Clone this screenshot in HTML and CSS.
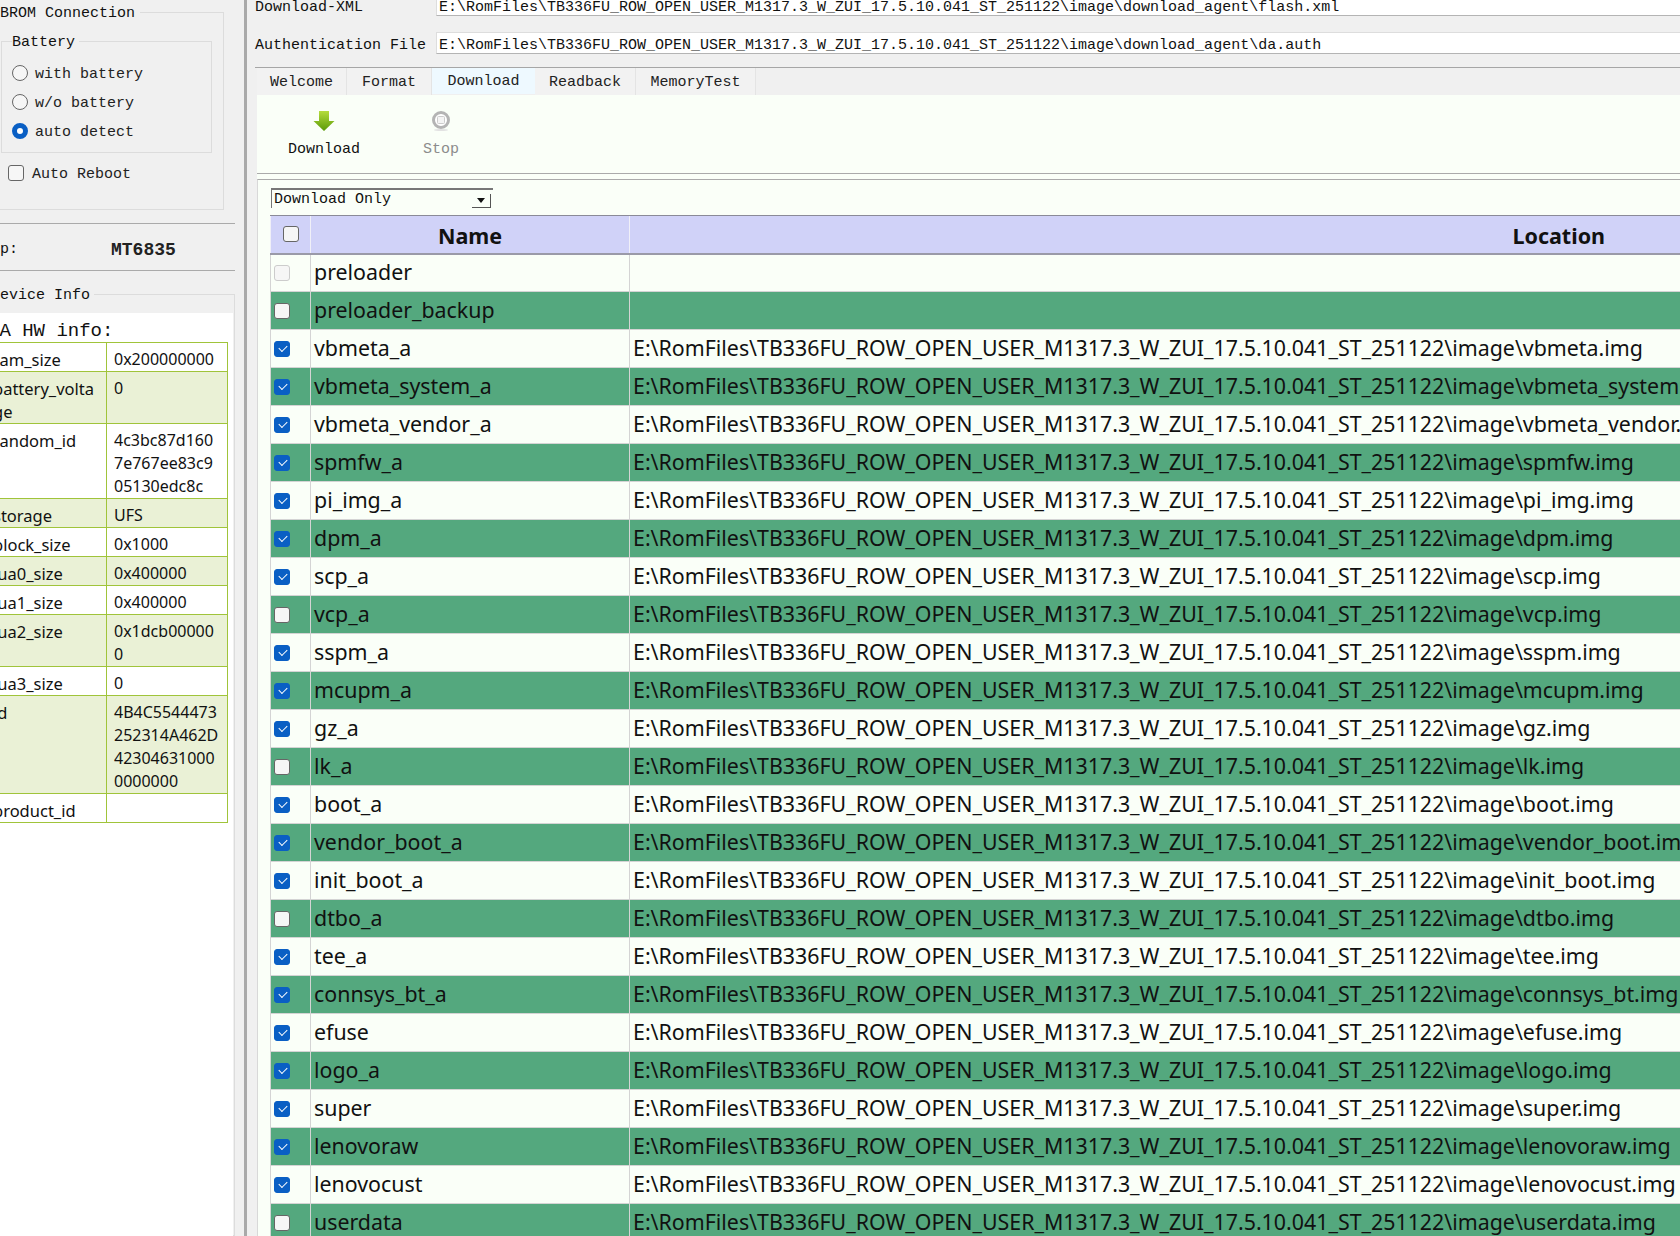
FILE: index.html
```html
<!DOCTYPE html>
<html lang="en">
<head>
<meta charset="utf-8">
<title>Download</title>
<link rel="stylesheet" href="styles.css">
</head>
<body>
<div class="app">
  <aside class="side">
    <fieldset class="brom">
      <legend>BROM Connection</legend>
      <fieldset class="battery">
        <legend>Battery</legend>
        <div class="opt"><span class="radio"></span>with battery</div>
        <div class="opt"><span class="radio"></span>w/o battery</div>
        <div class="opt"><span class="radio on"></span>auto detect</div>
      </fieldset>
      <div class="opt reboot"><span class="cb"></span>Auto Reboot</div>
    </fieldset>
    <div class="chip"><span class="chip-label">Chip:</span><span class="chip-value">MT6835</span></div>
    <fieldset class="device">
      <legend>Device Info</legend>
      <div class="device-pane">
        <div class="hw-title">DA HW info:</div>
        <table class="hw">
          <colgroup><col class="hw-k"><col class="hw-v"></colgroup>
          <tr><td>ram_size</td><td>0x200000000</td></tr>
          <tr class="alt"><td>battery_voltage</td><td>0</td></tr>
          <tr><td>random_id</td><td>4c3bc87d1607e767ee83c905130edc8c</td></tr>
          <tr class="alt"><td>storage</td><td>UFS</td></tr>
          <tr><td>block_size</td><td>0x1000</td></tr>
          <tr class="alt"><td>lua0_size</td><td>0x400000</td></tr>
          <tr><td>lua1_size</td><td>0x400000</td></tr>
          <tr class="alt"><td>lua2_size</td><td>0x1dcb000000</td></tr>
          <tr><td>lua3_size</td><td>0</td></tr>
          <tr class="alt"><td>id</td><td>4B4C5544473252314A462D423046310000000000</td></tr>
          <tr><td>product_id</td><td></td></tr>
        </table>
      </div>
    </fieldset>
  </aside>
  <div class="splitter"></div>
  <main class="main">
    <div class="file-row first"><label>Download-XML</label><div class="path">E:\RomFiles\TB336FU_ROW_OPEN_USER_M1317.3_W_ZUI_17.5.10.041_ST_251122\image\download_agent\flash.xml</div></div>
    <div class="file-row"><label>Authentication File</label><div class="path">E:\RomFiles\TB336FU_ROW_OPEN_USER_M1317.3_W_ZUI_17.5.10.041_ST_251122\image\download_agent\da.auth</div></div>
    <nav class="tabs">
      <div class="tab t1">Welcome</div>
      <div class="tab t2">Format</div>
      <div class="tab t3 active">Download</div>
      <div class="tab t4">Readback</div>
      <div class="tab t5">MemoryTest</div>
    </nav>
    <section class="pane">
      <div class="toolbar">
        <div class="tool">
          <svg class="ic" width="22" height="22" viewBox="0 0 22 22"><defs><linearGradient id="g" x1="0" y1="0" x2="0" y2="1"><stop offset="0" stop-color="#b4dc3c"/><stop offset="1" stop-color="#5a9a08"/></linearGradient></defs><path d="M6 1h10v10h5.500L11 21 .5 11H6z" fill="url(#g)"/></svg>
          <span>Download</span>
        </div>
        <div class="tool off">
          <svg class="ic" width="22" height="22" viewBox="0 0 22 22"><circle cx="11" cy="10" r="7.500" fill="#fff" stroke="#b4b4b4" stroke-width="3"/><rect x="7.500" y="6.500" width="7" height="7" rx="1" fill="#f4f4f4" stroke="#ccc"/><ellipse cx="11" cy="20" rx="7" ry="1" fill="#e2e2e2"/></svg>
          <span>Stop</span>
        </div>
      </div>
      <div class="frame">
        <div class="combo"><span>Download Only</span><span class="arrow"></span></div>
        <table class="parts">
          <colgroup><col class="c0"><col class="c1"><col class="c2"></colgroup>
          <thead><tr><th><span class="box head"></span></th><th>Name</th><th>Location</th></tr></thead>
          <tbody>
            <tr><td><span class="box dis"></span></td><td>preloader</td><td></td></tr>
            <tr><td><span class="box"></span></td><td>preloader_backup</td><td></td></tr>
            <tr><td><span class="box on"></span></td><td>vbmeta_a</td><td>E:\RomFiles\TB336FU_ROW_OPEN_USER_M1317.3_W_ZUI_17.5.10.041_ST_251122\image\vbmeta.img</td></tr>
            <tr><td><span class="box on"></span></td><td>vbmeta_system_a</td><td>E:\RomFiles\TB336FU_ROW_OPEN_USER_M1317.3_W_ZUI_17.5.10.041_ST_251122\image\vbmeta_system.img</td></tr>
            <tr><td><span class="box on"></span></td><td>vbmeta_vendor_a</td><td>E:\RomFiles\TB336FU_ROW_OPEN_USER_M1317.3_W_ZUI_17.5.10.041_ST_251122\image\vbmeta_vendor.img</td></tr>
            <tr><td><span class="box on"></span></td><td>spmfw_a</td><td>E:\RomFiles\TB336FU_ROW_OPEN_USER_M1317.3_W_ZUI_17.5.10.041_ST_251122\image\spmfw.img</td></tr>
            <tr><td><span class="box on"></span></td><td>pi_img_a</td><td>E:\RomFiles\TB336FU_ROW_OPEN_USER_M1317.3_W_ZUI_17.5.10.041_ST_251122\image\pi_img.img</td></tr>
            <tr><td><span class="box on"></span></td><td>dpm_a</td><td>E:\RomFiles\TB336FU_ROW_OPEN_USER_M1317.3_W_ZUI_17.5.10.041_ST_251122\image\dpm.img</td></tr>
            <tr><td><span class="box on"></span></td><td>scp_a</td><td>E:\RomFiles\TB336FU_ROW_OPEN_USER_M1317.3_W_ZUI_17.5.10.041_ST_251122\image\scp.img</td></tr>
            <tr><td><span class="box"></span></td><td>vcp_a</td><td>E:\RomFiles\TB336FU_ROW_OPEN_USER_M1317.3_W_ZUI_17.5.10.041_ST_251122\image\vcp.img</td></tr>
            <tr><td><span class="box on"></span></td><td>sspm_a</td><td>E:\RomFiles\TB336FU_ROW_OPEN_USER_M1317.3_W_ZUI_17.5.10.041_ST_251122\image\sspm.img</td></tr>
            <tr><td><span class="box on"></span></td><td>mcupm_a</td><td>E:\RomFiles\TB336FU_ROW_OPEN_USER_M1317.3_W_ZUI_17.5.10.041_ST_251122\image\mcupm.img</td></tr>
            <tr><td><span class="box on"></span></td><td>gz_a</td><td>E:\RomFiles\TB336FU_ROW_OPEN_USER_M1317.3_W_ZUI_17.5.10.041_ST_251122\image\gz.img</td></tr>
            <tr><td><span class="box"></span></td><td>lk_a</td><td>E:\RomFiles\TB336FU_ROW_OPEN_USER_M1317.3_W_ZUI_17.5.10.041_ST_251122\image\lk.img</td></tr>
            <tr><td><span class="box on"></span></td><td>boot_a</td><td>E:\RomFiles\TB336FU_ROW_OPEN_USER_M1317.3_W_ZUI_17.5.10.041_ST_251122\image\boot.img</td></tr>
            <tr><td><span class="box on"></span></td><td>vendor_boot_a</td><td>E:\RomFiles\TB336FU_ROW_OPEN_USER_M1317.3_W_ZUI_17.5.10.041_ST_251122\image\vendor_boot.img</td></tr>
            <tr><td><span class="box on"></span></td><td>init_boot_a</td><td>E:\RomFiles\TB336FU_ROW_OPEN_USER_M1317.3_W_ZUI_17.5.10.041_ST_251122\image\init_boot.img</td></tr>
            <tr><td><span class="box"></span></td><td>dtbo_a</td><td>E:\RomFiles\TB336FU_ROW_OPEN_USER_M1317.3_W_ZUI_17.5.10.041_ST_251122\image\dtbo.img</td></tr>
            <tr><td><span class="box on"></span></td><td>tee_a</td><td>E:\RomFiles\TB336FU_ROW_OPEN_USER_M1317.3_W_ZUI_17.5.10.041_ST_251122\image\tee.img</td></tr>
            <tr><td><span class="box on"></span></td><td>connsys_bt_a</td><td>E:\RomFiles\TB336FU_ROW_OPEN_USER_M1317.3_W_ZUI_17.5.10.041_ST_251122\image\connsys_bt.img</td></tr>
            <tr><td><span class="box on"></span></td><td>efuse</td><td>E:\RomFiles\TB336FU_ROW_OPEN_USER_M1317.3_W_ZUI_17.5.10.041_ST_251122\image\efuse.img</td></tr>
            <tr><td><span class="box on"></span></td><td>logo_a</td><td>E:\RomFiles\TB336FU_ROW_OPEN_USER_M1317.3_W_ZUI_17.5.10.041_ST_251122\image\logo.img</td></tr>
            <tr><td><span class="box on"></span></td><td>super</td><td>E:\RomFiles\TB336FU_ROW_OPEN_USER_M1317.3_W_ZUI_17.5.10.041_ST_251122\image\super.img</td></tr>
            <tr><td><span class="box on"></span></td><td>lenovoraw</td><td>E:\RomFiles\TB336FU_ROW_OPEN_USER_M1317.3_W_ZUI_17.5.10.041_ST_251122\image\lenovoraw.img</td></tr>
            <tr><td><span class="box on"></span></td><td>lenovocust</td><td>E:\RomFiles\TB336FU_ROW_OPEN_USER_M1317.3_W_ZUI_17.5.10.041_ST_251122\image\lenovocust.img</td></tr>
            <tr><td><span class="box"></span></td><td>userdata</td><td>E:\RomFiles\TB336FU_ROW_OPEN_USER_M1317.3_W_ZUI_17.5.10.041_ST_251122\image\userdata.img</td></tr>
          </tbody>
        </table>
      </div>
    </section>
  </main>
</div>
</body>
</html>
```
FILE: styles.css
```css
* { box-sizing: border-box; }
html, body { margin: 0; height: 100%; overflow: hidden; background: #f0f0f0; }
body { font: 15px/20px "Liberation Mono", monospace; color: #111; }
.app { display: flex; width: 1680px; height: 1236px; overflow: hidden; }

/* left column */
.side { flex: 0 0 244px; width: 244px; display: flex; flex-direction: column; overflow: hidden; }
fieldset { margin: 0; padding: 0; border: 1px solid #dcdcdc; min-width: 0; }
legend { padding: 4px 5px 0; line-height: 20px; }
.brom { margin: 0 0 0 -20px; width: 244px; padding: 0 0 22px; }
.brom > legend { padding: 4px 5px 0 0; margin-left: 19px; }
.battery { margin: 5px 0 0 20px; width: 211px; padding: 5px 0 7px 10px; border-color: #dcdcdc; }
.battery > legend { margin-left: 0; padding: 4px 4px 0 0; }
.opt { display: flex; align-items: center; height: 29px; padding-top: 4px; color: #222; }
.radio { width: 16px; height: 16px; margin: -4px 7px 0 0; border-radius: 50%; border: 1px solid #666; background: #f6f6f6; flex: none; }
.radio.on { border: 5px solid #0a5fc4; background: #fff; }
.reboot { margin: 5px 0 0 27px; }
.cb { width: 16px; height: 16px; margin: -4px 8px 0 0; border: 1px solid #666; border-radius: 3px; background: #f6f6f6; flex: none; }
.chip { margin-top: 13px; width: 235px; height: 48px; padding-top: 5px; border-top: 1px solid #aaa; border-bottom: 1px solid #aaa; display: flex; align-items: center; }
.chip-label { margin-left: -27px; width: 138px; flex: none; }
.chip-value { font-size: 18px; font-weight: 700; color: #222; }
.device { flex: 1; margin: 11px 0 0 -20px; width: 255px; padding: 0; }
.device > legend { margin-left: 10px; padding: 4px 4px 0 0; }
.device-pane { height: 100%; margin-top: 7px; margin-right: 1px; background: #fff; padding-top: 7px; }
.hw-title { font-size: 19px; line-height: 22px; margin-left: 7px; height: 22px; }
.hw { margin: 0 0 0 1px; border-collapse: collapse; table-layout: fixed; width: 245px; font: 16.500px/23px "Noto Sans", sans-serif; color: #111; }
.hw-k { width: 124px; }
.hw-v { width: 121px; }
.hw td { border: 1px solid #a0c43a; padding: 5px 5px 0 10px; vertical-align: top; word-break: break-all; }
.hw td + td { padding: 5px 8px 0 7px; font-size: 16px; }
.hw .alt td { background: #eaf1d6; }

.splitter { flex: 0 0 3px; background: #a9a9a9; }

/* main */
.main { flex: 1; min-width: 0; padding-left: 8px; }
.file-row { display: flex; height: 22px; margin-bottom: 16px; }
.file-row.first { margin-top: -6px; }
.file-row label { width: 181px; flex: none; line-height: 27px; }
.path { flex: 1; white-space: nowrap; background: #fff; border-top: 1px solid #ddd; border-bottom: 1px solid #b4b4b4; border-left: 1px solid #ddd; padding-left: 2px; line-height: 26px; }
.tabs { display: flex; height: 28px; margin-top: -3px; border-top: 1px solid #a6a6a6; padding-left: 2px; }
.tab { height: 27px; line-height: 29px; text-align: center; border-right: 1px solid #e4e4e4; background: #f2f2f2; color: #222; }
.t1 { width: 90px; }
.t2 { width: 85px; }
.t3 { width: 103px; }
.t4 { width: 101px; }
.t5 { width: 120px; }
.tab.active { background: #eef9ff; height: 26px; line-height: 27px; border: 0; }
.pane { margin-left: 2px; background: #fafff8; height: 1200px; }
.toolbar { display: flex; height: 79px; border-bottom: 1px solid #aaa; padding-left: 31px; }
.tool { width: 72px; margin-right: 45px; display: flex; flex-direction: column; align-items: center; padding-top: 15px; }
.tool.off { width: 36px; color: #8c8c8c; margin-right: 0; margin-left: 18px; }
.ic { height: 22px; margin-bottom: 8px; }
.frame { margin-top: 5px; border-top: 1px solid #aaa; border-left: 1px solid #d8d8d8; padding: 8px 0 0 13px; }
.combo { display: flex; align-items: center; justify-content: space-between; width: 222px; height: 20px; border-top: 2px solid #777; border-left: 1px solid #777; padding: 2px 2px 0 2px; background: #fafff8; }
.arrow { width: 19px; height: 14px; border-right: 1px solid #555; border-bottom: 1px solid #555; background: #fafff8; display: flex; align-items: center; justify-content: center; margin-top: 1px; }
.arrow::after { content: ""; border: 4px solid transparent; border-top: 5px solid #111; border-bottom: 0; }
.parts { margin: 7px 0 0 -1px; border-collapse: collapse; table-layout: fixed; width: 2217px; font: 21.370px/30px "Noto Sans", sans-serif; color: #111; border-left: 1px solid #808090; }
.c0 { width: 40px; }
.c1 { width: 319px; }
.c2 { width: 1858px; }
.parts th { height: 38px; padding: 3px 0 0; background: #d0d2f8; border-top: 1px solid #8a8a98; border-bottom: 2px solid #9a9aa8; border-left: 1px solid #f0f0f8; font-size: 21.500px; font-weight: 700; text-align: center; }
.parts th:first-child { padding-top: 0; }
.parts td { height: 38px; padding: 0 0 2px 3px; background: #fafff8; border-bottom: 1px solid #d4d4d4; border-left: 1px solid #d4d4d4; white-space: nowrap; overflow: hidden; }
.parts td:first-child { padding-bottom: 0; }
.parts tbody tr:nth-child(even) td { background: #54a87e; }
.box { display: block; position: relative; width: 16px; height: 16px; border: 1px solid #666; border-radius: 3px; background: #f6f6f6; }
.box.head { margin: 0 auto; }
.box.dis { border-color: #ccc; }
.box.on { background: #0a5fc4; border-color: #0a5fc4; }
.box.on::after { content: ""; position: absolute; left: 4px; top: 3px; width: 7px; height: 4px; border-left: 1px solid #fff; border-bottom: 1px solid #fff; transform: rotate(-45deg); }
```
